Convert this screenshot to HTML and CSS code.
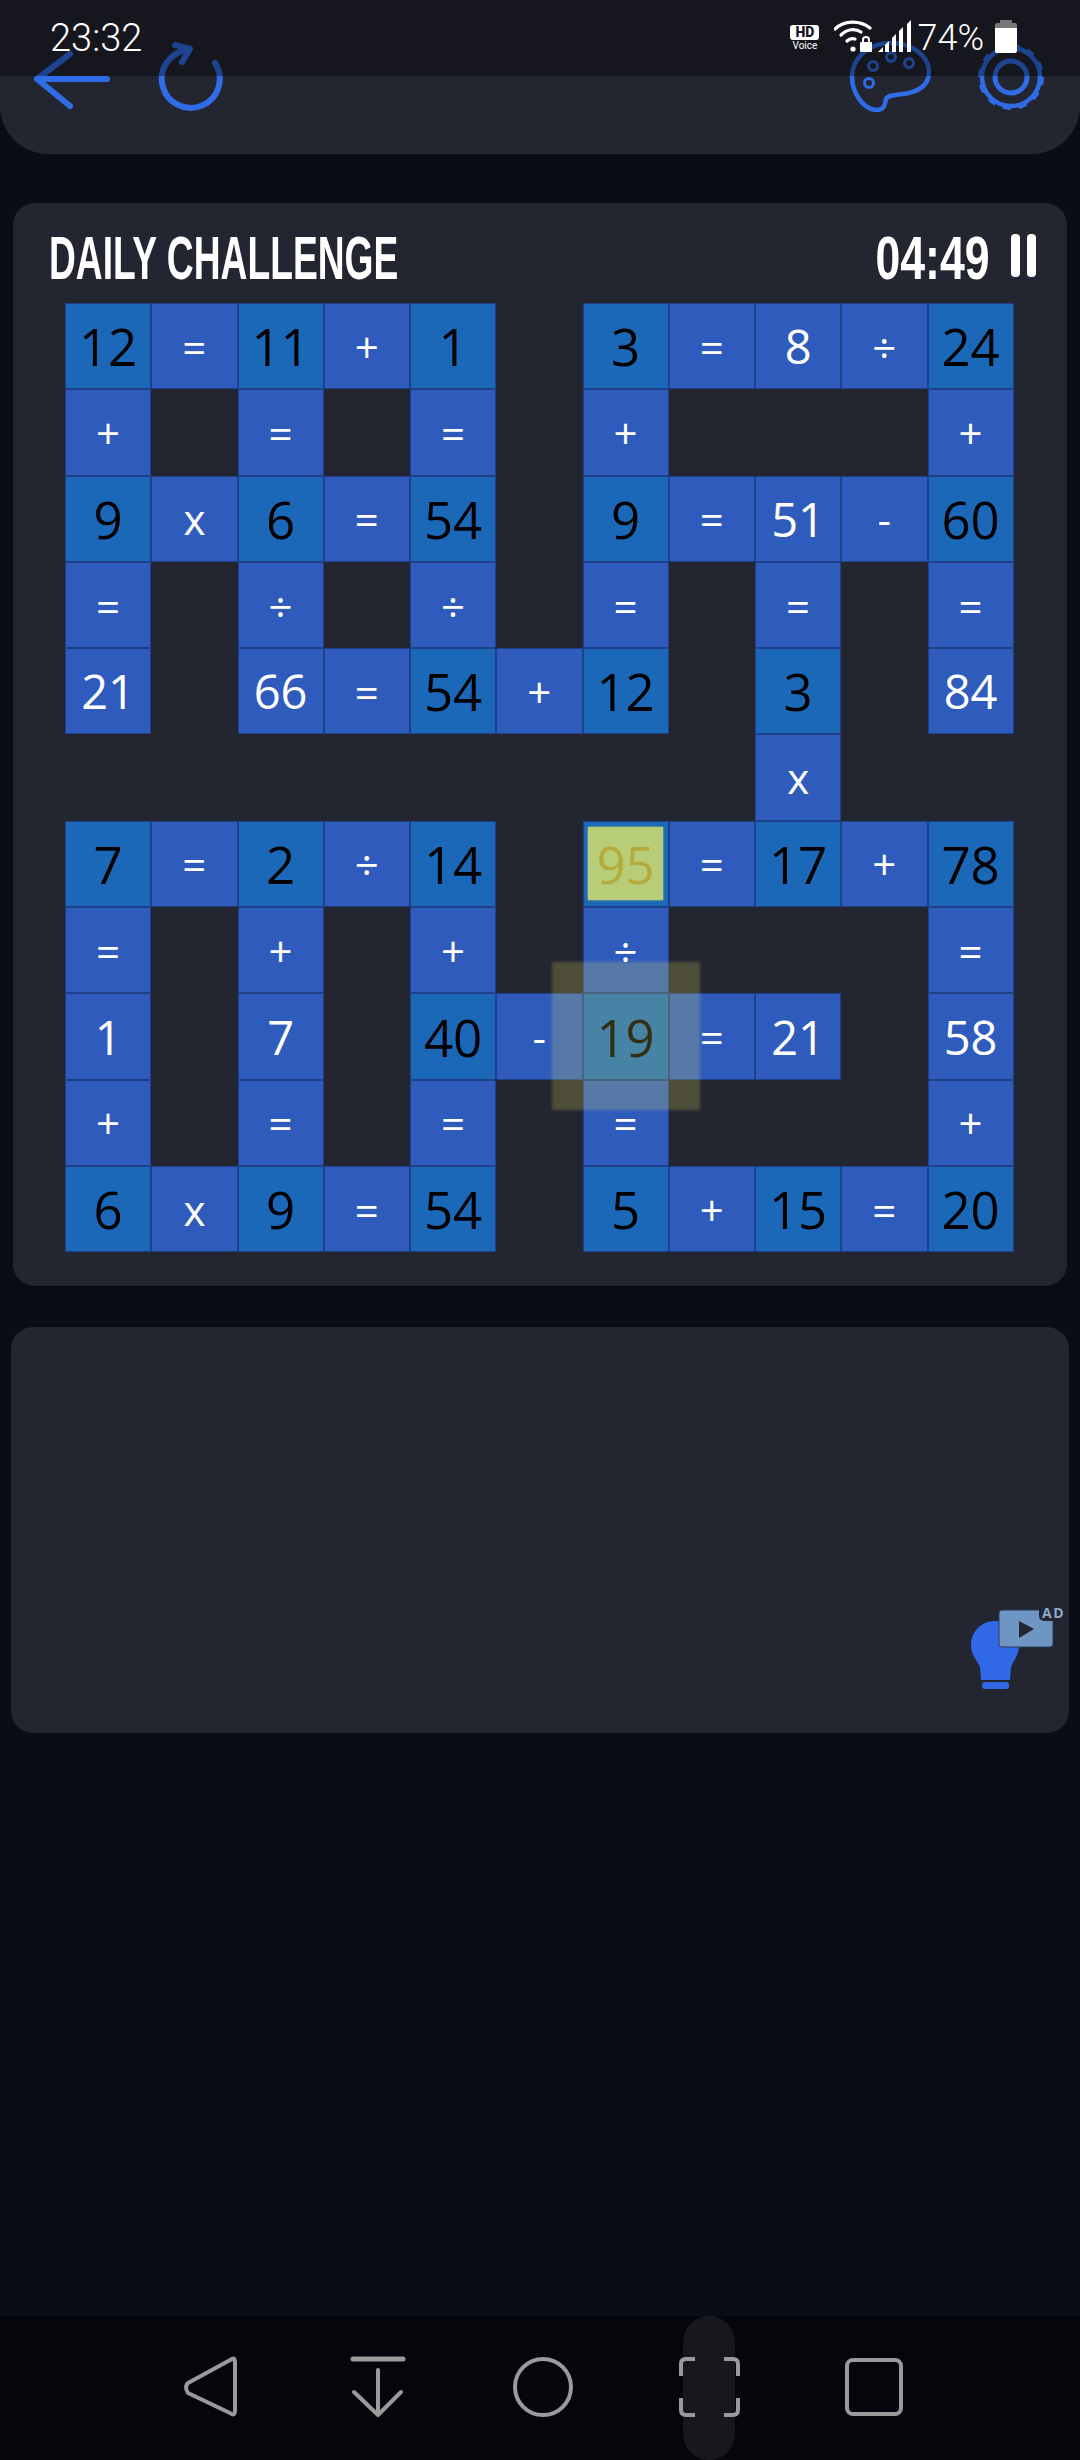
FILE: index.html
```html
<!DOCTYPE html>
<html lang="en">
<head>
  <meta charset="UTF-8" />
  <title>Daily Challenge</title>
  <link rel="stylesheet" href="styles.css">
</head>
<body>

  <!-- status bar sits over the header -->
  <div class="status-bar">
    <span class="clock">23:32</span>
    <div class="status-icons">
      <div class="hd"><span class="hd-box">HD</span><span class="hd-voice">Voice</span></div>
      <svg class="wifi" width="38" height="32" viewBox="0 0 38 32">
        <path d="M1 9 C10 0 26 0 36 8" fill="none" stroke="#fff" stroke-width="3.2" stroke-linecap="round"/>
        <path d="M7 15 C13 9 21 8 27 12" fill="none" stroke="#fff" stroke-width="3.2" stroke-linecap="round"/>
        <path d="M13 21 C15 19 18 18 21 19" fill="none" stroke="#fff" stroke-width="3.2" stroke-linecap="round"/>
        <circle cx="19" cy="29" r="2.6" fill="#fff"/>
        <rect x="26" y="22" width="12" height="10" rx="1" fill="#fff"/>
        <path d="M29 22 V20 A3 3 0 0 1 35 20 V22" fill="none" stroke="#fff" stroke-width="2"/>
      </svg>
      <svg class="signal" width="34" height="32" viewBox="0 0 34 32">
        <path d="M0 32 L5 27 V32 Z" fill="#fff"/>
        <path d="M7 32 V25 L11 21 V32 Z" fill="#fff"/>
        <path d="M14 32 V18 L18 14 V32 Z" fill="#fff"/>
        <path d="M21 32 V11 L25 7 V32 Z" fill="#fff"/>
        <path d="M29 32 V4 L33 0 V32 Z" fill="#fff"/>
      </svg>
      <span class="battery-pct">74%</span>
      <div class="battery"><div class="battery-cap"></div><div class="battery-fill"></div></div>
    </div>
  </div>

  <header class="top-bar">
    <div class="top-group">
      <svg width="80" height="72" viewBox="0 0 80 72" fill="none" stroke="#2f6ce5" stroke-width="6" stroke-linecap="round" stroke-linejoin="round">
        <path d="M75 39 H5 M38 14 L5 39 L38 66"/>
      </svg>
      <svg width="72" height="72" viewBox="0 0 72 72" fill="none" stroke="#2f6ce5" stroke-width="6" stroke-linecap="round" stroke-linejoin="round">
        <path d="M60 23 A29 29 0 1 1 33 10"/>
        <path d="M20 5 L35 9 L27 22"/>
      </svg>
    </div>
    <div class="top-group">
      <svg width="82" height="72" viewBox="0 0 82 72" fill="none" stroke="#2f6ce5" stroke-width="4.5">
        <path d="M42 3 C63 3 80 16 80 32 C80 46 68 52 54 54 C46 55 39 55 37 59 C36 63 36 70 28 70 C14 70 3 52 3 37 C3 18 20 3 42 3 Z"/>
        <circle cx="24" cy="26" r="4.5" stroke-width="3"/>
        <circle cx="42" cy="17" r="4.5" stroke-width="3"/>
        <circle cx="60" cy="23" r="4.5" stroke-width="3"/>
        <circle cx="20" cy="43" r="4.5" stroke-width="3"/>
      </svg>
      <svg width="72" height="72" viewBox="0 0 72 72" fill="none" stroke="#2f6ce5">
        <circle cx="37" cy="37" r="29" stroke-width="4.5"/>
        <circle cx="37" cy="37" r="31.5" stroke-width="3" stroke-dasharray="8.25 8.25"/>
        <circle cx="37" cy="37" r="16" stroke-width="5"/>
      </svg>
    </div>
  </header>

  <section class="card board-card">
    <div class="board-head">
      <h1 class="board-title">DAILY CHALLENGE</h1>
      <div class="board-timer">
        <span class="timer-text">04:49</span>
        <span class="pause"><i></i><i></i></span>
      </div>
    </div>

    <div class="board">
      <div class="cell num">12</div><div class="cell op">=</div><div class="cell num">11</div><div class="cell op">+</div><div class="cell num">1</div><div></div><div class="cell num">3</div><div class="cell op">=</div><div class="cell op big">8</div><div class="cell op">÷</div><div class="cell num">24</div>
      <div class="cell op">+</div><div></div><div class="cell op">=</div><div></div><div class="cell op">=</div><div></div><div class="cell op">+</div><div></div><div></div><div></div><div class="cell op">+</div>
      <div class="cell num">9</div><div class="cell op">x</div><div class="cell num">6</div><div class="cell op">=</div><div class="cell num">54</div><div></div><div class="cell num">9</div><div class="cell op">=</div><div class="cell op big">51</div><div class="cell op">-</div><div class="cell num">60</div>
      <div class="cell op">=</div><div></div><div class="cell op">÷</div><div></div><div class="cell op">÷</div><div></div><div class="cell op">=</div><div></div><div class="cell op">=</div><div></div><div class="cell op">=</div>
      <div class="cell op big">21</div><div></div><div class="cell op big">66</div><div class="cell op">=</div><div class="cell num">54</div><div class="cell op">+</div><div class="cell num">12</div><div></div><div class="cell num">3</div><div></div><div class="cell op big">84</div>
      <div></div><div></div><div></div><div></div><div></div><div></div><div></div><div></div><div class="cell op">x</div><div></div><div></div>
      <div class="cell num">7</div><div class="cell op">=</div><div class="cell num">2</div><div class="cell op">÷</div><div class="cell num">14</div><div></div><div class="cell num selected"><span class="selected-box">95</span></div><div class="cell op">=</div><div class="cell num">17</div><div class="cell op">+</div><div class="cell num">78</div>
      <div class="cell op">=</div><div></div><div class="cell op">+</div><div></div><div class="cell op">+</div><div></div><div class="cell op">÷</div><div></div><div></div><div></div><div class="cell op">=</div>
      <div class="cell op big">1</div><div></div><div class="cell op big">7</div><div></div><div class="cell num">40</div><div class="cell op">-</div><div class="cell num focus">19<span class="focus-glow"></span></div><div class="cell op">=</div><div class="cell op big">21</div><div></div><div class="cell op big">58</div>
      <div class="cell op">+</div><div></div><div class="cell op">=</div><div></div><div class="cell op">=</div><div></div><div class="cell op">=</div><div></div><div></div><div></div><div class="cell op">+</div>
      <div class="cell num">6</div><div class="cell op">x</div><div class="cell num">9</div><div class="cell op">=</div><div class="cell num">54</div><div></div><div class="cell num">5</div><div class="cell op">+</div><div class="cell num">15</div><div class="cell op">=</div><div class="cell num">20</div>
    </div>
  </section>

  <section class="card tray">
    <div class="hint">
      <svg width="92" height="90" viewBox="0 0 92 90">
        <path d="M26 16 C12 16 2 27 2 40 C2 50 8 55 11 62 L12 75 H41 L42 62 C45 55 50 50 50 40 C50 27 40 16 26 16 Z" fill="#3068e6"/>
        <rect x="13" y="77" width="27" height="7" rx="3" fill="#3068e6"/>
        <rect x="30" y="5" width="54" height="37" rx="3" fill="#6f95c4" stroke="#2b3a55" stroke-width="1"/>
        <path d="M50 16 L65 24 L50 33 Z" fill="#232530"/>
      </svg>
      <span class="hint-ad">AD</span>
    </div>
  </section>

  <nav class="nav-bar">
    <svg width="166" height="144" viewBox="0 0 166 144" fill="none" stroke="#9a9a9a" stroke-width="4" stroke-linejoin="round">
      <path d="M104 43 Q107 41 107 47 V94 Q107 101 102 97 L60 77 Q56 71 60 67 Z"/>
    </svg>
    <svg width="166" height="144" viewBox="0 0 166 144" fill="none" stroke="#9a9a9a" stroke-linecap="round" stroke-linejoin="round">
      <path d="M59 43 H109" stroke-width="5"/>
      <path d="M84 54 V99 M60 76 L84 99 L107 76" stroke-width="4"/>
    </svg>
    <svg width="166" height="144" viewBox="0 0 166 144" fill="none" stroke="#9a9a9a" stroke-width="4">
      <circle cx="83" cy="71" r="28"/>
    </svg>
    <svg width="166" height="144" viewBox="0 0 166 144" fill="none" stroke="#9a9a9a" stroke-width="4">
      <rect x="57" y="0" width="52" height="144" rx="26" fill="#17181d" stroke="none"/>
      <path d="M69 43 H60 Q55 43 55 48 V60 M98 43 H107 Q112 43 112 48 V60 M69 99 H60 Q55 99 55 94 V82 M98 99 H107 Q112 99 112 94 V82"/>
    </svg>
    <svg width="166" height="144" viewBox="0 0 166 144" fill="none" stroke="#9a9a9a" stroke-width="4">
      <rect x="55" y="44" width="54" height="54" rx="6"/>
    </svg>
  </nav>

</body>
</html>
```

FILE: styles.css
```css
* { box-sizing: border-box; }
html, body { margin: 0; padding: 0; }
body {
  position: relative;
  width: 1080px;
  height: 2460px;
  overflow: hidden;
  display: flex;
  flex-direction: column;
  background: #0a0d15;
  font-family: 'Open Sans', sans-serif;
  color: #fff;
}

/* status bar */
.status-bar {
  position: absolute;
  top: 0;
  left: 0;
  width: 100%;
  height: 76px;
  z-index: 5;
  display: flex;
  justify-content: space-between;
  padding: 0 63px 0 50px;
  background: rgba(0, 0, 0, 0.37);
  font-family: 'Roboto', sans-serif;
}
.clock {
  font-size: 38px;
  line-height: 38px;
  margin-top: 19px;
  font-weight: 300;
}
.status-icons {
  display: flex;
  align-items: flex-start;
  padding-top: 20px;
}
.hd {
  width: 29px;
  margin-top: 5px;
  display: flex;
  flex-direction: column;
  align-items: center;
}
.hd-box {
  width: 29px;
  height: 15px;
  border-radius: 3px;
  background: #fff;
  color: #161720;
  font-size: 14px;
  line-height: 15px;
  font-weight: 900;
  text-align: center;
}
.hd-voice {
  font-size: 10px;
  line-height: 11px;
}
.wifi { margin-left: 15px; }
.signal { margin-left: 6px; }
.battery-pct {
  margin-left: 5px;
  font-size: 36px;
  line-height: 38px;
  font-weight: 300;
  margin-top: -1px;
}
.battery {
  width: 22px;
  height: 33px;
  margin-left: 11px;
  display: flex;
  flex-direction: column;
  align-items: center;
}
.battery-cap {
  width: 12px;
  height: 3px;
  background: #777;
}
.battery-fill {
  flex: 1;
  width: 22px;
  border-radius: 2px;
  background: linear-gradient(to bottom, #777 5px, #fff 5px);
}

/* header */
.top-bar {
  height: 154px;
  flex: none;
  display: flex;
  justify-content: space-between;
  padding: 40px 34px 0 32px;
  background: #232530;
  border-radius: 0 0 48px 48px;
}
.top-group {
  display: flex;
  gap: 43px;
  height: 72px;
}

/* panels */
.card {
  flex: none;
  background: #232530;
  border-radius: 22px;
}
.board-card {
  margin: 49px 13px 0;
  height: 1083px;
  padding: 23px 31px 0 36px;
}
.board-head {
  height: 77px;
  display: flex;
  justify-content: space-between;
  align-items: flex-start;
}
/* no condensed face installed, so squeeze the bold one */
.board-title, .timer-text {
  display: block;
  margin: 0;
  font-family: 'Liberation Sans', sans-serif;
  font-weight: 700;
  font-size: 62px;
  line-height: 64px;
  white-space: nowrap;
  color: #fff;
}
.board-title {
  transform: scaleX(0.6);
  transform-origin: left center;
}
.timer-text {
  transform: scaleX(0.72);
  transform-origin: right center;
}
.board-timer {
  display: flex;
  align-items: flex-start;
  gap: 21px;
}
.pause {
  display: flex;
  gap: 7px;
  margin-top: 8px;
}
.pause i {
  display: block;
  width: 9px;
  height: 43px;
  border-radius: 4px;
  background: #fff;
}

/* board grid */
.board {
  display: grid;
  grid-template-columns: repeat(11, 86.25px);
  grid-template-rows: repeat(11, 86.3px);
  margin-left: 16px;
}
.cell {
  position: relative;
  display: flex;
  align-items: center;
  justify-content: center;
  border: 1px solid #1f3f88;
}
.num {
  background: #1b68b8;
  color: #000;
  font-size: 51px;
}
.op {
  background: #2f5cbc;
  color: #fff;
  font-size: 42px;
}
.big { font-size: 47px; }
.selected-box {
  width: 75px;
  height: 73px;
  display: flex;
  align-items: center;
  justify-content: center;
  background: #b7cd78;
  box-shadow: 0 0 2px #b7cd78;
  color: #b5ab3b;
}
.focus-glow {
  position: absolute;
  left: -32px;
  top: -32px;
  width: 148px;
  height: 148px;
  z-index: 2;
  background: rgba(250, 240, 88, 0.2);
  filter: blur(1.5px);
}

/* tray */
.tray {
  position: relative;
  margin: 41px 11px 0;
  height: 406px;
}
.hint {
  position: absolute;
  left: 958px;
  top: 278px;
}
.hint svg { display: block; }
.hint-ad {
  position: absolute;
  left: 70px;
  top: 0;
  padding: 0 0 0 3px;
  background: #232530;
  border-radius: 0 0 0 5px;
  color: #8fa9c9;
  font-size: 14px;
  line-height: 16px;
  font-weight: 700;
  letter-spacing: 1.5px;
}

/* nav */
.nav-bar {
  margin-top: auto;
  height: 144px;
  flex: none;
  display: flex;
  padding-left: 128px;
  background: #05060b;
}
.nav-bar svg { flex: none; }
```
